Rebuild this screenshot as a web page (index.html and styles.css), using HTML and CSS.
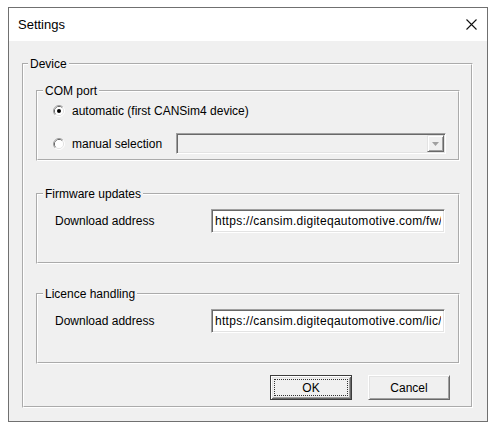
FILE: index.html
```html
<!DOCTYPE html>
<html>
<head>
<meta charset="utf-8">
<title>Settings</title>
<link rel="stylesheet" href="styles.css">
</head>
<body>
<div class="window">
  <div class="titlebar">
    <span class="title">Settings</span>
    <span class="close">
      <svg width="11" height="11" viewBox="0 0 11 11"><path d="M0.5 0.5 L10.5 10.5 M10.5 0.5 L0.5 10.5" stroke="#111" stroke-width="1.1" fill="none"/></svg>
    </span>
  </div>
  <div class="client">
    <fieldset class="group device">
      <legend>Device</legend>
      <div class="device-body">
        <fieldset class="group com">
          <legend>COM port</legend>
          <div class="com-body">
            <div class="radio-row">
              <span class="radio">
                <svg width="12" height="12" viewBox="0 0 12 12">
                  <path d="M2.11 9.89 A5.5 5.5 0 0 1 9.89 2.11" stroke="#a0a0a0" fill="none"/>
                  <path d="M9.89 2.11 A5.5 5.5 0 0 1 2.11 9.89" stroke="#ffffff" fill="none"/>
                  <path d="M2.82 9.18 A4.5 4.5 0 0 1 9.18 2.82" stroke="#696969" fill="none"/>
                  <path d="M9.18 2.82 A4.5 4.5 0 0 1 2.82 9.18" stroke="#e3e3e3" fill="none"/>
                  <circle cx="6" cy="6" r="4" fill="#fff"/>
                  <circle cx="6" cy="6" r="2" fill="#000"/>
                </svg>
              </span>
              <span class="radio-label">automatic (first CANSim4 device)</span>
            </div>
            <div class="radio-row second">
              <span class="radio">
                <svg width="12" height="12" viewBox="0 0 12 12">
                  <path d="M2.11 9.89 A5.5 5.5 0 0 1 9.89 2.11" stroke="#a0a0a0" fill="none"/>
                  <path d="M9.89 2.11 A5.5 5.5 0 0 1 2.11 9.89" stroke="#ffffff" fill="none"/>
                  <path d="M2.82 9.18 A4.5 4.5 0 0 1 9.18 2.82" stroke="#696969" fill="none"/>
                  <path d="M9.18 2.82 A4.5 4.5 0 0 1 2.82 9.18" stroke="#e3e3e3" fill="none"/>
                  <circle cx="6" cy="6" r="4" fill="#fff"/>
                </svg>
              </span>
              <span class="radio-label">manual selection</span>
              <div class="combo">
                <span class="combo-btn">
                  <svg width="7" height="4" viewBox="0 0 7 4"><path d="M0 0 H7 L3.5 4 Z" fill="#a0a0a0"/></svg>
                </span>
              </div>
            </div>
          </div>
        </fieldset>

        <fieldset class="group firmware">
          <legend>Firmware updates</legend>
          <div class="field-body">
            <div class="field-row">
              <label class="field-label">Download address</label>
              <input class="text-input" type="text" value="https://cansim.digiteqautomotive.com/fw/">
            </div>
          </div>
        </fieldset>

        <fieldset class="group licence">
          <legend>Licence handling</legend>
          <div class="field-body">
            <div class="field-row">
              <label class="field-label">Download address</label>
              <input class="text-input" type="text" value="https://cansim.digiteqautomotive.com/lic/check">
            </div>
          </div>
        </fieldset>

        <div class="buttons">
          <button class="btn default"><span class="focus-rect">OK</span></button>
          <button class="btn">Cancel</button>
        </div>
      </div>
    </fieldset>
  </div>
</div>
</body>
</html>
```

FILE: styles.css
```css
* {
  box-sizing: border-box;
}

body {
  margin: 0;
  background: #ffffff;
  font-family: "Liberation Sans", Arial, sans-serif;
  font-size: 12px;
  color: #000;
}

.window {
  margin: 7px 0 0 8px;
  width: 480px;
  height: 415px;
  border: 1px solid #707070;
  background: #f0f0f0;
  display: flex;
  flex-direction: column;
}

.titlebar {
  flex: none;
  height: 33px;
  background: #ffffff;
  display: flex;
  align-items: center;
  justify-content: space-between;
  padding: 0 10px 0 9px;
}

.title {
  font-size: 13px;
  color: #000;
}

.close {
  display: flex;
  width: 11px;
  height: 11px;
}

.client {
  padding: 16px 14px 0 13px;
}

.group {
  margin: 0;
  padding: 0;
  min-width: 0;
  border: 2px groove #ffffff;
}

.group legend {
  padding: 0 2px;
  margin-left: 5px;
  line-height: 14px;
  font-size: 12px;
}

.device > legend {
  margin-left: 4px;
}

.device-body {
  padding: 13px 11px 6px 12px;
}

.com-body {
  padding: 3px 12px 5px 15px;
}

.radio-row {
  display: flex;
  align-items: center;
  height: 20px;
}

.radio-row.second {
  margin-top: 12px;
  height: 21px;
}

.radio {
  display: flex;
  width: 12px;
  height: 12px;
  margin-right: 7px;
}

.combo {
  margin-left: auto;
  width: 270px;
  height: 21px;
  background: #f0f0f0;
  border: 1px solid;
  border-color: #a0a0a0 #ffffff #ffffff #a0a0a0;
  box-shadow: inset 1px 1px 0 #696969, inset -1px -1px 0 #e3e3e3;
  padding: 1px;
  display: flex;
  justify-content: flex-end;
}

.combo-btn {
  width: 17px;
  height: 17px;
  background: #f0f0f0;
  border: 1px solid;
  border-color: #e3e3e3 #696969 #696969 #e3e3e3;
  box-shadow: inset 1px 1px 0 #ffffff, inset -1px -1px 0 #a0a0a0;
  display: flex;
  align-items: center;
  justify-content: center;
}

.firmware {
  margin-top: 26px;
}

.licence {
  margin-top: 23px;
}

.field-body {
  padding: 8px 12px 29px 17px;
}

.field-row {
  display: flex;
  align-items: center;
  height: 24px;
}

.field-label {
  width: 156px;
}

.text-input {
  width: 234px;
  height: 24px;
  margin: 0;
  padding: 0 3px;
  background: #ffffff;
  border: 1px solid;
  border-color: #a0a0a0 #ffffff #ffffff #a0a0a0;
  box-shadow: inset 1px 1px 0 #696969, inset -1px -1px 0 #e3e3e3;
  font-family: "Liberation Sans", Arial, sans-serif;
  font-size: 12px;
  letter-spacing: 0.28px;
  color: #000;
  outline: none;
}

.buttons {
  margin-top: 11px;
  display: flex;
  justify-content: flex-end;
  gap: 16px;
  padding-right: 10px;
}

.btn {
  width: 82px;
  height: 25px;
  margin: 0;
  padding: 0;
  background: #f0f0f0;
  border: 1px solid;
  border-color: #ffffff #696969 #696969 #ffffff;
  box-shadow: inset 1px 1px 0 #e3e3e3, inset -1px -1px 0 #a0a0a0;
  font-family: "Liberation Sans", Arial, sans-serif;
  font-size: 12px;
  color: #000;
  display: flex;
  align-items: center;
  justify-content: center;
}

.btn.default {
  border: 1px solid #3c3c3c;
  box-shadow: inset 1px 1px 0 #ffffff, inset -1px -1px 0 #696969, inset 2px 2px 0 #e3e3e3, inset -2px -2px 0 #a0a0a0;
  align-items: stretch;
  padding: 3px;
}

.focus-rect {
  flex: 1;
  border: 1px dotted #333;
  display: flex;
  align-items: center;
  justify-content: center;
}
```
